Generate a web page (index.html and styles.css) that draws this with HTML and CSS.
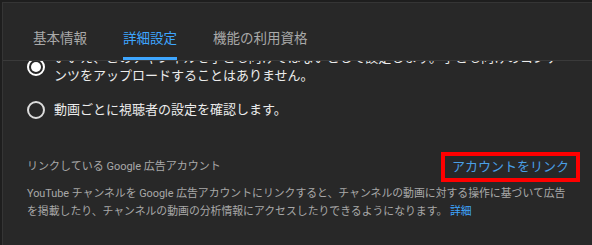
FILE: index.html
```html
<!DOCTYPE html>
<html lang="ja">
<head>
<meta charset="utf-8">
<link rel="stylesheet" href="styles.css">
</head>
<body>
<div class="panel">
  <nav class="tabs">
    <div class="tab">基本情報</div>
    <div class="tab active">詳細設定</div>
    <div class="tab">機能の利用資格</div>
  </nav>
  <div class="scroll">
    <div class="scroll-inner">
      <div class="options">
        <div class="option">
          <span class="radio checked"></span>
          <span class="option-text">いいえ、このチャンネルを子ども向けではないとして設定します。子ども向けのコンテンツをアップロードすることはありません。</span>
        </div>
        <div class="option">
          <span class="radio"></span>
          <span class="option-text">動画ごとに視聴者の設定を確認します。</span>
        </div>
      </div>
      <div class="link-row">
        <span class="link-label">リンクしている Google 広告アカウント</span>
        <span class="link-btn">アカウントをリンク</span>
      </div>
      <p class="desc">YouTube チャンネルを Google 広告アカウントにリンクすると、チャンネルの動画に対する操作に基づいて広告を掲載したり、チャンネルの動画の分析情報にアクセスしたりできるようになります。 <span class="more">詳細</span></p>
    </div>
  </div>
</div>
</body>
</html>
```

FILE: styles.css
```css
html, body {
  margin: 0;
  padding: 0;
  background: #1e1e1e;
  height: 100%;
}
body {
  font-family: "Roboto", "Noto Sans CJK JP", sans-serif;
  overflow: hidden;
}
.panel {
  margin: 2px 0 0 2px;
  height: 243px;
  background: #282828;
  border-top: 1px solid #353535;
  border-left: 1px solid #353535;
  box-sizing: border-box;
}
.tabs {
  display: flex;
  gap: 36px;
  padding-left: 30px;
  border-bottom: 1px solid #3a3a3a;
}
.tab {
  font-size: 13.5px;
  line-height: 20px;
  color: #aaaaaa;
  padding-top: 25px;
  padding-bottom: 9px;
  border-bottom: 3px solid transparent;
}
.tab.active {
  color: #3ea6ff;
  border-bottom-color: #3ea6ff;
  border-radius: 2px 2px 0 0;
}
.scroll {
  height: 182px;
  overflow: hidden;
}
.scroll-inner {
  margin-top: -12px;
  padding: 0 0 0 24px;
}
.options {
  display: flex;
  flex-direction: column;
  gap: 16px;
}
.option {
  display: flex;
  align-items: center;
  gap: 9px;
}
.radio {
  flex: none;
  width: 18px;
  height: 18px;
  box-sizing: border-box;
  border: 2px solid #dcdcdc;
  border-radius: 50%;
  position: relative;
}
.radio.checked {
  border-color: #ffffff;
}
.radio.checked::after {
  content: "";
  position: absolute;
  left: 2px;
  top: 2px;
  width: 10px;
  height: 10px;
  border-radius: 50%;
  background: #ffffff;
}
.option-text {
  width: 512px;
  font-size: 13px;
  line-height: 18px;
  color: #ececec;
}
.link-row {
  display: flex;
  align-items: center;
  justify-content: space-between;
  height: 30px;
  margin-top: 33px;
  padding-right: 12px;
}
.link-label {
  font-size: 11px;
  line-height: 18px;
  color: #a8a8a8;
}
.link-btn {
  font-size: 13px;
  line-height: 18px;
  color: #4a9fe6;
  padding: 2px 7px;
  border: 4px solid #ff0000;
}
.desc {
  margin: 3px 0 0;
  width: 546px;
  font-size: 10.85px;
  line-height: 18px;
  color: #a8a8a8;
}
.more {
  color: #3ea6ff;
}
```
